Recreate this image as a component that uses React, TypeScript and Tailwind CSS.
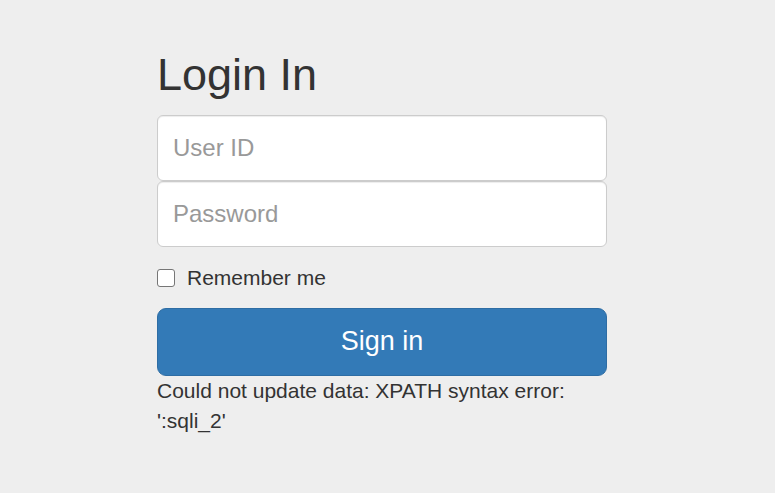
import { useState } from "react";

export default function App() {
  const [userId, setUserId] = useState("");
  const [password, setPassword] = useState("");
  const [remember, setRemember] = useState(false);

  return (
    <div
      className="min-h-screen bg-[#eeeeee] text-[#333333]"
      style={{ fontFamily: '"Liberation Sans", Arial, Helvetica, sans-serif' }}
    >
      <div className="pl-[157px] pt-[50px]">
        <form className="w-[450px]" onSubmit={(event) => event.preventDefault()}>
          <h2 className="mb-[15px] text-[45px] leading-[1.1] font-normal">Login In</h2>
          <input
            type="text"
            value={userId}
            onChange={(event) => setUserId(event.target.value)}
            placeholder="User ID"
            className="block h-[66px] w-full rounded-[6px] border border-[#cccccc] bg-white px-[15px] text-[24px] text-[#555555] shadow-[inset_0_1px_1px_rgba(0,0,0,0.075)] outline-none placeholder:text-[#999999]"
          />
          <input
            type="password"
            value={password}
            onChange={(event) => setPassword(event.target.value)}
            placeholder="Password"
            className="mb-[16px] block h-[66px] w-full rounded-[6px] border border-[#cccccc] bg-white px-[15px] text-[24px] text-[#555555] shadow-[inset_0_1px_1px_rgba(0,0,0,0.075)] outline-none placeholder:text-[#999999]"
          />
          <label className="mb-[15px] flex h-[30px] cursor-pointer items-center gap-[12px] text-[21px] leading-[30px]">
            <input
              type="checkbox"
              checked={remember}
              onChange={(event) => setRemember(event.target.checked)}
              className="h-[18px] w-[18px] appearance-none rounded-[3px] border border-[#767676] bg-white checked:bg-[#337ab7]"
            />
            <span>Remember me</span>
          </label>
          <button
            type="submit"
            className="block h-[68px] w-full rounded-[9px] border border-[#2e6da4] bg-[#337ab7] text-[27px] text-white"
          >
            Sign in
          </button>
          <p className="text-[21px] leading-[30px]">Could not update data: XPATH syntax error: ':sqli_2'</p>
        </form>
      </div>
    </div>
  );
}
